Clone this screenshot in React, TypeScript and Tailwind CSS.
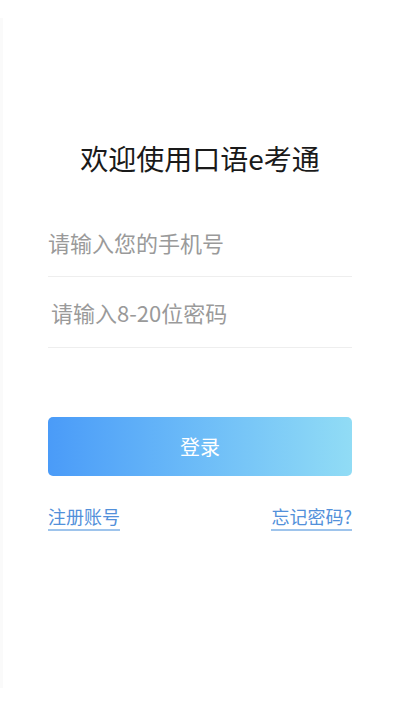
import React from "react";

export default function App() {
  return (
    <div
      className="w-[400px] h-[711px] bg-white overflow-hidden"
      style={{ fontFamily: '"Noto Sans CJK SC", "Noto Sans", sans-serif' }}
    >
      <div className="pt-[18px]">
        <div className="h-[670px] border-l-[3px] border-[#fafafa]">
          <div className="flex flex-col pl-[45px] pr-[48px]">
            <h1 className="mt-[120px] text-center text-[28px] leading-[40px] text-[#1a1a1a] font-normal">
              欢迎使用口语e考通
            </h1>
            <div className="mt-[30px] h-[69px] border-b border-[#eeeeee] flex items-center">
              <span className="text-[22px] leading-[30px] text-[#9a9a9a]">请输入您的手机号</span>
            </div>
            <div className="h-[71px] border-b border-[#eeeeee] flex items-center">
              <span className="text-[22px] leading-[30px] text-[#9a9a9a] pl-[3px]">请输入8-20位密码</span>
            </div>
            <button className="mt-[69px] h-[59px] rounded-[5px] bg-gradient-to-r from-[#4a9bf8] to-[#91dcf5] text-white text-[20px] leading-[30px]">
              登录
            </button>
            <div className="mt-[28px] flex justify-between items-start">
              <span className="text-[18px] leading-[24px] text-[#5290da] border-b-2 border-[#9ec4ec] pb-[1px]">注册账号</span>
              <span className="text-[18px] leading-[24px] text-[#5290da] border-b-2 border-[#9ec4ec] pb-[1px]">忘记密码?</span>
            </div>
          </div>
        </div>
      </div>
    </div>
  );
}
